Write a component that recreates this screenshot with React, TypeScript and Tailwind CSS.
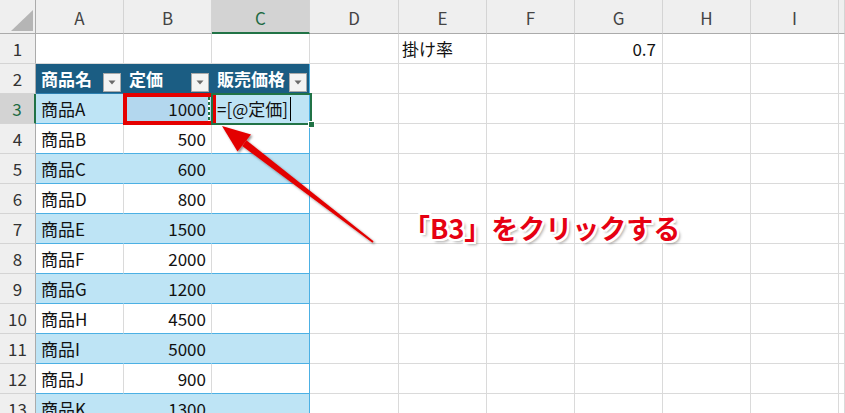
import { twMerge } from "tailwind-merge";
import { clsx } from "clsx";
import type { ReactNode } from "react";

const cn = (...a: any[]) => twMerge(clsx(a));

const products: [string, number][] = [
  ["商品A", 1000],
  ["商品B", 500],
  ["商品C", 600],
  ["商品D", 800],
  ["商品E", 1500],
  ["商品F", 2000],
  ["商品G", 1200],
  ["商品H", 4500],
  ["商品I", 5000],
  ["商品J", 900],
  ["商品K", 1300],
];

const letters = ["A", "B", "C", "D", "E", "F", "G", "H", "I", ""];

function Cell({ className, children }: { className?: string; children?: ReactNode }) {
  return (
    <div
      className={cn(
        "flex items-center overflow-hidden whitespace-nowrap border-r border-b border-[#dadada] bg-white text-[17px] text-[#111]",
        className,
      )}
    >
      {children}
    </div>
  );
}

function FilterButton() {
  return (
    <div className="mb-px flex h-[19px] w-[18px] shrink-0 items-center justify-center self-end border border-[#a9a9a9] bg-[#f4f4f4]">
      <svg width="8" height="5" viewBox="0 0 8 5">
        <path d="M0.5 0.5 L7.5 0.5 L4 4.5 Z" fill="#6b6b6b" />
      </svg>
    </div>
  );
}

function TableCell({ row, col }: { row: number; col: number }) {
  if (row === 2) {
    const titles = ["商品名", "定価", "販売価格"];
    return (
      <Cell
        className={cn(
          "justify-between bg-[#1b5d83] pl-[5px] pr-[2px] font-bold text-white border-b-[#2c7fb0]",
          col < 2 ? "border-r-[#1b5d83]" : "border-r-[#4cb0e4]",
        )}
      >
        <span>{titles[col]}</span>
        <FilterButton />
      </Cell>
    );
  }
  const [name, price] = products[row - 3] ?? ["", 0];
  const band = row % 2 === 1;
  const active = row === 3 && col === 1;
  return (
    <Cell
      className={cn(
        "border-b-[#4cb0e4]",
        band ? "bg-[#bee4f5]" : "bg-white",
        active && "bg-[#b3d7ee]",
        col === 2
          ? "border-r-[#4cb0e4]"
          : band
            ? "border-r-[#bee4f5]"
            : "border-r-[#dadada]",
        col === 1 ? "justify-end pr-[5px]" : "pl-[5px]",
      )}
    >
      {col === 0 && name}
      {col === 1 && price}
      {col === 2 && row === 3 && (
        <>
          <span>=[@定価]</span>
          <span className="ml-[2px] h-[24px] w-px bg-black" />
        </>
      )}
    </Cell>
  );
}

export default function App() {
  const rows = Array.from({ length: 13 }, (_, i) => i + 1);
  return (
    <div className="relative h-[413px] w-[845px] overflow-hidden bg-white font-['Noto_Sans_CJK_JP',sans-serif]">
      <div className="grid grid-cols-[36px_88px_88px_98px_89px_88px_88px_88px_88px_88px_1fr] grid-rows-[34px] auto-rows-[30px]">
        {/* column headers */}
        <div className="relative border-r border-b border-[#ababab] bg-[#efefef]">
          <svg className="absolute left-0 top-0" width="36" height="34" viewBox="0 0 36 34">
            <path d="M11 31 L33 10 L33 31 Z" fill="#b5b5b5" />
          </svg>
        </div>
        {letters.map((l, i) => (
          <Cell
            key={l + i}
            className={cn(
              "justify-center bg-[#efefef] pt-[3px] text-[#444] border-r-[#d4d4d4] border-b-[#ababab]",
              l === "C" && "border-b-2 border-b-[#217346] bg-[#d3d3d3] text-[#1e6b42]",
            )}
          >
            {l}
          </Cell>
        ))}

        {rows.map((r) => (
          <div key={r} className="contents">
            <Cell
              className={cn(
                "justify-center bg-[#efefef] text-[#333] border-r-[#ababab] border-b-[#d4d4d4]",
                r === 3 && "border-r-2 border-r-[#217346] bg-[#d3d3d3] text-[#1e6b42]",
              )}
            >
              {r}
            </Cell>
            {letters.map((l, c) =>
              r >= 2 && c <= 2 ? (
                <TableCell key={c} row={r} col={c} />
              ) : (
                <Cell key={c} className={cn(c === 6 && "justify-end pr-[6px]", c === 4 && "pl-[3px]")}>
                  {r === 1 && c === 4 && "掛け率"}
                  {r === 1 && c === 6 && "0.7"}
                </Cell>
              ),
            )}
          </div>
        ))}
      </div>

      {/* reference marquee on B3 */}
      <div className="absolute left-[208px] top-[97px] h-[24px] w-[2px] bg-[repeating-linear-gradient(to_bottom,#217346_0,#217346_3px,#ffffff_3px,#ffffff_5px)]" />
      {/* red highlight on B3 */}
      <div className="absolute left-[123px] top-[93px] h-[32px] w-[93px] border-4 border-[#e50000]" />
      {/* active cell C3 */}
      <div className="absolute left-[211px] top-[93px] h-[32px] w-[101px] border-2 border-[#217346]" />
      <div className="absolute left-[308px] top-[121px] h-[7px] w-[7px] border border-white bg-[#217346]" />

      {/* arrow */}
      <svg className="pointer-events-none absolute left-0 top-0" width="845" height="413" viewBox="0 0 845 413">
        <defs>
          <filter id="sh" x="-20%" y="-20%" width="140%" height="140%">
            <feDropShadow dx="1.5" dy="1.5" stdDeviation="1.2" floodColor="#000" floodOpacity="0.45" />
          </filter>
        </defs>
        <g filter="url(#sh)" fill="#e30000">
          <polygon points="373.6,241.2 372.4,242.8 242.2,145.9 246.4,140.3" />
          <polygon points="222,126 251,134.5 244.3,143.1 237.5,151.5" />
        </g>
      </svg>

      {/* callout */}
      <div className="absolute left-[403px] top-[214px] text-[27px] font-bold leading-none text-[#e60012] [text-shadow:2px_0_0_#fff,-2px_0_0_#fff,0_2px_0_#fff,0_-2px_0_#fff,2px_2px_0_#fff,-2px_-2px_0_#fff,2px_-2px_0_#fff,-2px_2px_0_#fff,3px_3px_3px_rgba(0,0,0,0.35)]">
        「B3」をクリックする
      </div>
    </div>
  );
}
